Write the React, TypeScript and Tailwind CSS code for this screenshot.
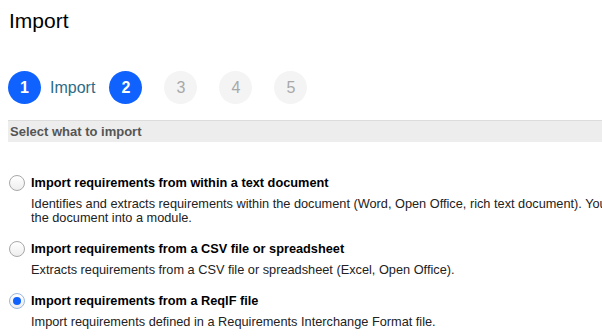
const steps = [
  { n: 1, active: true, label: "Import" },
  { n: 2, active: true },
  { n: 3, active: false },
  { n: 4, active: false },
  { n: 5, active: false },
];

const options = [
  {
    title: "Import requirements from within a text document",
    desc: [
      "Identifies and extracts requirements within the document (Word, Open Office, rich text document). You can import",
      "the document into a module.",
    ],
    checked: false,
  },
  {
    title: "Import requirements from a CSV file or spreadsheet",
    desc: ["Extracts requirements from a CSV file or spreadsheet (Excel, Open Office)."],
    checked: false,
  },
  {
    title: "Import requirements from a ReqIF file",
    desc: ["Import requirements defined in a Requirements Interchange Format file."],
    checked: true,
  },
];

function Radio({ checked }: { checked: boolean }) {
  return (
    <span
      className={
        "w-[16px] h-[16px] rounded-full border flex items-center justify-center shrink-0 bg-gradient-to-b from-white to-[#eeeeee] " +
        (checked ? "border-[#9ab8dc]" : "border-[#a8a8a8]")
      }
    >
      {checked && <span className="w-[8px] h-[8px] rounded-full bg-[#0f62fe]" />}
    </span>
  );
}

export default function App() {
  return (
    <div className="w-[602px] h-[336px] overflow-hidden bg-white font-['Liberation_Sans',Arial,sans-serif]">
      <h1 className="pl-[9px] pt-[9px] text-[21px] leading-[24px] text-black">Import</h1>

      {/* Stepper */}
      <div className="flex items-center pl-[8px] mt-[38px]">
        {steps.map((s) => (
          <div key={s.n} className="flex items-center mr-[22px]">
            <span
              className={
                "w-[33px] h-[33px] rounded-full flex items-center justify-center text-[16px] " +
                (s.active ? "bg-[#0f62fe] text-white font-bold" : "bg-[#f4f4f4] text-[#a8a8a8]")
              }
            >
              {s.n}
            </span>
            {s.label && (
              <span className="ml-[9px] -mr-[8px] text-[16px] text-[#2d6b87]">{s.label}</span>
            )}
          </div>
        ))}
      </div>

      {/* Section header */}
      <div className="ml-[8px] mt-[16px] h-[22px] border-t border-[#dcdcdc] bg-[#ededed] flex items-center pl-[2px]">
        <span className="text-[13px] font-bold text-[#555]">Select what to import</span>
      </div>

      {/* Options */}
      <div className="mt-[31px] pl-[9px] flex flex-col gap-[14px]">
        {options.map((o) => (
          <div key={o.title}>
            <div className="flex items-center gap-[6px]">
              <Radio checked={o.checked} />
              <span className="text-[12.75px] font-bold text-black whitespace-nowrap">{o.title}</span>
            </div>
            <div className="ml-[22px] mt-[5px] text-[12.75px] leading-[14px] text-[#222]">
              {o.desc.map((line) => (
                <p key={line} className="whitespace-nowrap">
                  {line}
                </p>
              ))}
            </div>
          </div>
        ))}
      </div>
    </div>
  );
}
